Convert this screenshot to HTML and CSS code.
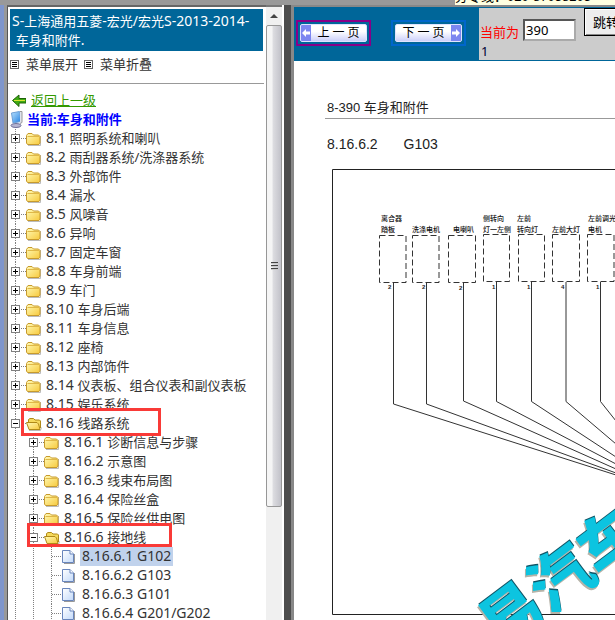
FILE: index.html
```html
<!DOCTYPE html>
<html lang="zh-CN">
<head>
<meta charset="utf-8">
<title>车身和附件</title>
<link rel="stylesheet" href="styles.css">
</head>
<body>
<svg class="defs" aria-hidden="true">
  <defs>
    <linearGradient id="gold" x1="0" y1="0" x2="1" y2="1"><stop offset="0" stop-color="#fffbb8"/><stop offset="1" stop-color="#f7c93c"/></linearGradient>
    <linearGradient id="paper" x1="0" y1="0" x2="1" y2="1"><stop offset="0" stop-color="#ffffff"/><stop offset="1" stop-color="#c3dafa"/></linearGradient>
    <linearGradient id="screen" x1="0" y1="0" x2="1" y2="1"><stop offset="0" stop-color="#b9e2ff"/><stop offset="1" stop-color="#1f7fe0"/></linearGradient>
  </defs>
  <symbol id="plus" viewBox="0 0 18 19">
    <path d="M13 9.500h5" stroke="#808080" stroke-dasharray="1 1"/>
    <rect x="3.500" y="5.500" width="8" height="8" fill="#fff" stroke="#808080"/>
    <path d="M5 9.500h5M7.500 7v5" stroke="#000"/>
  </symbol>
  <symbol id="minus" viewBox="0 0 18 19">
    <path d="M13 9.500h5" stroke="#808080" stroke-dasharray="1 1"/>
    <rect x="3.500" y="5.500" width="8" height="8" fill="#fff" stroke="#808080"/>
    <path d="M5 9.500h5" stroke="#000"/>
  </symbol>
  <symbol id="join" viewBox="0 0 18 19"><path d="M8 9.500h10" stroke="#808080" stroke-dasharray="1 1"/></symbol>
  <symbol id="folder" viewBox="0 0 18 19">
    <path d="M2 16.500h12.500V7" fill="none" stroke="#bbb" stroke-width="1"/>
    <path d="M.5 14V6.500L2 4.500h4l1.500 1.500h5l1.500 1.500V14l-1 1.500H1.500z" fill="url(#gold)" stroke="#c79a2c"/>
    <path d="M1.500 7.500h11.500" stroke="#e0b848"/>
  </symbol>
  <symbol id="open" viewBox="0 0 18 19">
    <path d="M3 16.500h11.500l1-3" fill="none" stroke="#bbb" stroke-width="1"/>
    <path d="M2.500 13V5.500L4 4.500h3.500L9 6h4.500l1 1V14" fill="#f5d95c" stroke="#b08a18"/>
    <path d="M.5 8.500H11l1.500 1.500 1.500 5.500H3z" fill="url(#gold)" stroke="#b08a18"/>
  </symbol>
  <symbol id="file" viewBox="0 0 18 19">
    <path d="M2 16.500h10.500V7" fill="none" stroke="#999" stroke-width="1"/>
    <path d="M.5 3.500H8l3.500 3.500v8.500H.5z" fill="url(#paper)" stroke="#6885bc"/>
    <path d="M8 3.500V7h3.500" fill="#fff" stroke="#6885bc"/>
  </symbol>
  <symbol id="list" viewBox="0 0 9 9"><rect x=".5" y=".5" width="8" height="8" fill="#fff" stroke="#666"/><path d="M2 2.500h5M2 4.500h5M2 6.500h5" stroke="#000"/></symbol>
  <symbol id="back" viewBox="0 0 18 19"><path d="M4.500 9.500L11 4v3.500h7v4.500h-7v3.500z" fill="#3faa12" stroke="#1d6208"/><path d="M6 9.500h11" stroke="#d7e632"/></symbol>
  <symbol id="computer" viewBox="0 0 18 19">
    <ellipse cx="8" cy="15.500" rx="5" ry="2" fill="#b6b6d2" stroke="#6f6f98"/>
    <path d="M3.500 3l8-1.500 1.500 10-8 1.500z" fill="url(#screen)" stroke="#6ea0d6"/>
    <path d="M12 1.500h2v11l-2 1" fill="#dfe3ee" stroke="#999"/>
  </symbol>
</svg>
<header class="strip"><span class="hotline">分专线：020-87058205</span></header>
<div class="frames">
  <nav class="sidebar">
    <div class="panel">
      <h1 class="book">S-<span class="han">上海通用五菱</span>-<span class="han">宏光</span>/<span class="han">宏光</span>S-2013-2014-<br>&nbsp;<span class="han">车身和附件</span>.</h1>
      <div class="actions">
        <a href="#"><svg class="list"><use href="#list"/></svg>菜单展开</a>
        <a href="#"><svg class="list"><use href="#list"/></svg>菜单折叠</a>
      </div>
      <hr class="rule">
      <div class="row"><svg class="icon lead"><use href="#back"/></svg><a class="return" href="#">返回上一级</a></div>
      <div class="row"><svg class="icon"><use href="#computer"/></svg><strong class="current">当前:车身和附件</strong></div>
      <ul class="tree">
        <li><div class="row"><button class="toggle" aria-label="8.1"><svg class="icon"><use href="#plus"/></svg></button><svg class="icon"><use href="#folder"/></svg><a href="#"><b>8.1 </b>照明系统和喇叭</a></div></li>
        <li><div class="row"><button class="toggle" aria-label="8.2"><svg class="icon"><use href="#plus"/></svg></button><svg class="icon"><use href="#folder"/></svg><a href="#"><b>8.2 </b>雨刮器系统/洗涤器系统</a></div></li>
        <li><div class="row"><button class="toggle" aria-label="8.3"><svg class="icon"><use href="#plus"/></svg></button><svg class="icon"><use href="#folder"/></svg><a href="#"><b>8.3 </b>外部饰件</a></div></li>
        <li><div class="row"><button class="toggle" aria-label="8.4"><svg class="icon"><use href="#plus"/></svg></button><svg class="icon"><use href="#folder"/></svg><a href="#"><b>8.4 </b>漏水</a></div></li>
        <li><div class="row"><button class="toggle" aria-label="8.5"><svg class="icon"><use href="#plus"/></svg></button><svg class="icon"><use href="#folder"/></svg><a href="#"><b>8.5 </b>风噪音</a></div></li>
        <li><div class="row"><button class="toggle" aria-label="8.6"><svg class="icon"><use href="#plus"/></svg></button><svg class="icon"><use href="#folder"/></svg><a href="#"><b>8.6 </b>异响</a></div></li>
        <li><div class="row"><button class="toggle" aria-label="8.7"><svg class="icon"><use href="#plus"/></svg></button><svg class="icon"><use href="#folder"/></svg><a href="#"><b>8.7 </b>固定车窗</a></div></li>
        <li><div class="row"><button class="toggle" aria-label="8.8"><svg class="icon"><use href="#plus"/></svg></button><svg class="icon"><use href="#folder"/></svg><a href="#"><b>8.8 </b>车身前端</a></div></li>
        <li><div class="row"><button class="toggle" aria-label="8.9"><svg class="icon"><use href="#plus"/></svg></button><svg class="icon"><use href="#folder"/></svg><a href="#"><b>8.9 </b>车门</a></div></li>
        <li><div class="row"><button class="toggle" aria-label="8.10"><svg class="icon"><use href="#plus"/></svg></button><svg class="icon"><use href="#folder"/></svg><a href="#"><b>8.10 </b>车身后端</a></div></li>
        <li><div class="row"><button class="toggle" aria-label="8.11"><svg class="icon"><use href="#plus"/></svg></button><svg class="icon"><use href="#folder"/></svg><a href="#"><b>8.11 </b>车身信息</a></div></li>
        <li><div class="row"><button class="toggle" aria-label="8.12"><svg class="icon"><use href="#plus"/></svg></button><svg class="icon"><use href="#folder"/></svg><a href="#"><b>8.12 </b>座椅</a></div></li>
        <li><div class="row"><button class="toggle" aria-label="8.13"><svg class="icon"><use href="#plus"/></svg></button><svg class="icon"><use href="#folder"/></svg><a href="#"><b>8.13 </b>内部饰件</a></div></li>
        <li><div class="row"><button class="toggle" aria-label="8.14"><svg class="icon"><use href="#plus"/></svg></button><svg class="icon"><use href="#folder"/></svg><a href="#"><b>8.14 </b>仪表板、组合仪表和副仪表板</a></div></li>
        <li><div class="row"><button class="toggle" aria-label="8.15"><svg class="icon"><use href="#plus"/></svg></button><svg class="icon"><use href="#folder"/></svg><a href="#"><b>8.15 </b>娱乐系统</a></div></li>
        <li>
          <div class="row"><button class="toggle" aria-label="8.16"><svg class="icon"><use href="#minus"/></svg></button><svg class="icon"><use href="#open"/></svg><a href="#"><b>8.16 </b>线路系统</a><span class="mark mark-outer"></span></div>
          <ul>
            <li><div class="row"><button class="toggle" aria-label="8.16.1"><svg class="icon"><use href="#plus"/></svg></button><svg class="icon"><use href="#folder"/></svg><a href="#"><b>8.16.1 </b>诊断信息与步骤</a></div></li>
            <li><div class="row"><button class="toggle" aria-label="8.16.2"><svg class="icon"><use href="#plus"/></svg></button><svg class="icon"><use href="#folder"/></svg><a href="#"><b>8.16.2 </b>示意图</a></div></li>
            <li><div class="row"><button class="toggle" aria-label="8.16.3"><svg class="icon"><use href="#plus"/></svg></button><svg class="icon"><use href="#folder"/></svg><a href="#"><b>8.16.3 </b>线束布局图</a></div></li>
            <li><div class="row"><button class="toggle" aria-label="8.16.4"><svg class="icon"><use href="#plus"/></svg></button><svg class="icon"><use href="#folder"/></svg><a href="#"><b>8.16.4 </b>保险丝盒</a></div></li>
            <li><div class="row"><button class="toggle" aria-label="8.16.5"><svg class="icon"><use href="#plus"/></svg></button><svg class="icon"><use href="#folder"/></svg><a href="#"><b>8.16.5 </b>保险丝供电图</a></div></li>
            <li>
              <div class="row"><button class="toggle" aria-label="8.16.6"><svg class="icon"><use href="#minus"/></svg></button><svg class="icon"><use href="#open"/></svg><a href="#"><b>8.16.6 </b>接地线</a><span class="mark mark-inner"></span></div>
              <ul>
                <li><div class="row"><svg class="icon"><use href="#join"/></svg><svg class="icon"><use href="#file"/></svg><a class="selected" href="#"><b>8.16.6.1 G102</b></a></div></li>
                <li><div class="row"><svg class="icon"><use href="#join"/></svg><svg class="icon"><use href="#file"/></svg><a href="#"><b>8.16.6.2 G103</b></a></div></li>
                <li><div class="row"><svg class="icon"><use href="#join"/></svg><svg class="icon"><use href="#file"/></svg><a href="#"><b>8.16.6.3 G101</b></a></div></li>
                <li><div class="row"><svg class="icon"><use href="#join"/></svg><svg class="icon"><use href="#file"/></svg><a href="#"><b>8.16.6.4 G201/G202</b></a></div></li>
              </ul>
            </li>
          </ul>
        </li>
      </ul>
    </div>
    <div class="scrollbar">
      <div class="scroll-up"></div>
      <div class="track"><div class="thumb"><i></i><i></i><i></i></div></div>
    </div>
  </nav>
  <div class="splitter"></div>
  <main class="viewer">
    <div class="toolbar">
      <div class="pager">
        <a class="page-link visited" href="#"><span class="page-button"><svg class="arrow" viewBox="0 0 10 18"><path d="M1 9l4-4v2.500h4v3H5V13z"/></svg><span class="page-text">上 一 页</span></span></a>
        <a class="page-link" href="#"><span class="page-button"><span class="page-text">下 一 页</span><svg class="arrow" viewBox="0 0 10 18"><path d="M9 9L5 5v2.500H1v3h4V13z"/></svg></span></a>
      </div>
      <form class="jump">
        <div class="jump-row">
          <label for="page">当前为</label>
          <input id="page" type="text" value="390">
          <button type="button">跳转</button>
        </div>
        <span class="first">1</span>
      </form>
    </div>
    <article class="sheet">
      <p class="running">8-390 车身和附件</p>
      <h2 class="section"><span>8.16.6.2</span><span>G103</span></h2>
      <svg class="diagram" width="480" height="451" viewBox="332 169 480 451">
        <path d="M812 169.500H332.500v445H812" fill="none" stroke="#222"/>
        <g class="boxes">
          <path d="M379.500 235.500h26.500v47h-26.500z"/><path d="M412.500 235.500h26.500v47h-26.500z"/><path d="M448.500 235.500h27v47h-27z"/><path d="M483.500 234.500h26v47h-26z"/><path d="M518.500 234.500h26v47h-26z"/><path d="M552.500 234.500h27v47h-27z"/><path d="M587.500 234.500h26.500v47h-26.500z"/>
        </g>
        <g class="wires">
          <path d="M393.500 282v122L616 475"/><path d="M426.500 282v122L616 473"/><path d="M463.500 282v119L616 469"/><path d="M496.500 282v119.500L616 464"/><path d="M531.500 282v119.500L616 457"/><path d="M566 282v119.500L616 444"/><path d="M600.500 282v119.500L616 421"/>
        </g>
        <g class="names">
          <text x="381" y="221">离合器</text><text x="381" y="232">踏板</text>
          <text x="412" y="232">洗涤电机</text><text x="453" y="232">电喇叭</text>
          <text x="483" y="221">侧转向</text><text x="483" y="232">灯一左侧</text>
          <text x="517" y="221">左前</text><text x="517" y="232">转向灯</text>
          <text x="552" y="232">左前大灯</text>
          <text x="588" y="221">左前调光</text><text x="588" y="232">电机</text>
        </g>
        <g class="pins">
          <text x="388" y="289">2</text><text x="422" y="289">2</text><text x="459" y="290">2</text><text x="492" y="289">1</text><text x="527" y="289">1</text><text x="561" y="289">4</text><text x="596" y="289">1</text>
        </g>
        <g class="watermark" transform="translate(500 652) rotate(-37)">
          <text class="edge" x="-2" y="1">易汽车</text>
          <text class="shade" x="1" y="-1">易汽车</text>
          <text class="face" x="0" y="0">易汽车</text>
        </g>
      </svg>
    </article>
  </main>
</div>
</body>
</html>
```
FILE: styles.css
```css
* { box-sizing: border-box; }

body {
  margin: 0;
  height: 100vh;
  overflow: hidden;
  display: flex;
  flex-direction: column;
  background: #999;
  color: #333;
  font: 13px/19px "Noto Sans", "Noto Sans CJK SC", sans-serif;
}

a { color: inherit; text-decoration: none; }
.defs { position: absolute; width: 0; height: 0; }

.strip {
  flex: none;
  height: 5px;
  display: flex;
  justify-content: flex-end;
  overflow: hidden;
}
.hotline {
  width: 160px;
  display: flex;
  align-items: flex-end;
  background: #ffffe1;
  color: #000;
  font: 13px/16px "Liberation Sans", "Noto Sans CJK SC", sans-serif;
  white-space: nowrap;
}

.frames {
  flex: 1;
  min-height: 0;
  display: grid;
  grid-template-columns: 284px 8px minmax(0, 1fr);
}

.sidebar {
  display: flex;
  min-height: 0;
  border-left: 4px solid #7f96cc;
  border-right: 2px solid #fff;
  background: #999;
  padding-left: 3px;
}
.panel {
  flex: 1;
  min-width: 0;
  overflow: hidden;
  background: #fff;
  border-top: 2px solid #666;
  border-left: 1px solid #555;
}
.book {
  margin: 2px 3px 0 2px;
  padding: 2px;
  background: #069;
  color: #fff;
  font-size: 14px;
  font-weight: 400;
  line-height: 19px;
  white-space: nowrap;
}
.han { font-size: 13px; line-height: 1; }
.actions {
  display: flex;
  gap: 6px;
  padding: 4px 2px 9px;
}
.actions a { display: flex; align-items: center; gap: 7px; }
.list { width: 9px; height: 9px; }
.rule { margin: 0 2px 7px 0; border: 0; border-top: 1px solid #999; }

.row {
  position: relative;
  display: flex;
  align-items: center;
  height: 19px;
  white-space: nowrap;
}
.icon { flex: none; display: block; width: 18px; height: 19px; }
.lead { margin-right: 5px; }
.return { color: #390; text-decoration: underline; }
.current { color: #00f; padding-left: 1px; }

.tree, .tree ul { margin: 0; padding: 0; list-style: none; }
.tree ul { padding-left: 18px; }
.tree li {
  background: repeating-linear-gradient(#808080 0 1px, transparent 1px 2px) 7px 0 / 1px 100% no-repeat;
}
.toggle { padding: 0; border: 0; background: none; }
.tree a { padding: 0 2px; line-height: 19px; }
.tree b { font-size: 14px; font-weight: 400; line-height: 1; white-space: pre; }
.tree .selected { background: #c0d2ec; }
.mark { position: absolute; border: 3px solid #f93a37; }
.mark-outer { left: 13px; top: -6px; width: 140px; height: 28px; }
.mark-inner { left: 1px; top: -5px; width: 145px; height: 24px; }

.scrollbar {
  flex: none;
  width: 16px;
  display: flex;
  flex-direction: column;
  background: #f0f0f0;
  border-top: 2px solid #777;
}
.scroll-up { flex: none; display: grid; place-items: center; height: 18px; }
.scroll-up::before { content: ""; border: 4px solid transparent; border-top: 0; border-bottom-color: #444; }
.track { flex: 1; min-height: 0; }
.thumb {
  height: 81%;
  display: flex;
  flex-direction: column;
  align-items: center;
  justify-content: center;
  gap: 1px;
  border: 1px solid #979797;
  border-radius: 2px;
  background: linear-gradient(90deg, #f5f5f5 0 35%, #dcdce0 45%, #c2c2c9);
}
.thumb i { width: 7px; height: 2px; background: #444; border-bottom: 1px solid #ccc; }
.splitter { background: #4d4d4d; border-right: 1px solid #888; }

.viewer {
  min-width: 0;
  display: flex;
  flex-direction: column;
  overflow: hidden;
  background: #fff;
  border-top: 2px solid #888;
  border-left: 2px solid #888;
}
.toolbar { flex: none; display: flex; height: 54px; background: #069; padding: 1px 0; }
.pager {
  flex: none;
  width: 185px;
  display: flex;
  align-items: flex-start;
  gap: 20px;
  padding: 12px 2px;
}
.page-link { display: block; padding: 2px; border: 2px solid #06c; }
.visited { border-color: #808; }
.page-button {
  display: flex;
  align-items: center;
  width: 67px;
  height: 18px;
  overflow: hidden;
  border: 1px solid #dfe3ff;
  border-radius: 2px;
  background: linear-gradient(#fff 40%, #ccd0fa);
}
.arrow { flex: none; width: 10px; height: 18px; background: #7c86f0; fill: #fff; }
.page-text { flex: 1; text-align: center; color: #000; font-size: 12px; line-height: 16px; }

.jump { flex: 1; min-width: 0; background: #ccc; padding-left: 1px; overflow: hidden; }
.jump-row { display: flex; align-items: center; height: 34px; }
.jump label { flex: none; padding-top: 14px; margin-right: 4px; color: #f00; }
.jump input {
  flex: none;
  width: 53px;
  height: 22px;
  margin: 12px 8px 2px 0;
  padding: 1px;
  border: 2px inset #aaa;
  background: #fff;
  color: #000;
  font: inherit;
}
.jump button {
  flex: none;
  align-self: flex-start;
  width: 44px;
  height: 28px;
  padding: 0;
  border: 1px solid #000;
  box-shadow: inset 1px 1px #fff, inset -1px -1px #888;
  background: #eee;
  color: #000;
  font: inherit;
}
.first { display: block; padding-left: 1px; color: #003; }

.sheet { flex: 1; min-height: 0; padding: 37px 0 0 31px; color: #222; font-family: "Liberation Sans", "Noto Sans CJK SC", sans-serif; }
.running { margin: 0; padding: 0 2px; height: 21px; border-bottom: 1px solid #999; }
.section { display: flex; gap: 26px; margin: 16px 0 15px; padding-left: 2px; font-size: 14px; font-weight: 400; }
.diagram { display: block; margin-left: 7px; }
.boxes { fill: none; stroke: #333; stroke-dasharray: 6 3; }
.wires { fill: none; stroke: #333; }
.names { fill: #111; font-size: 7px; font-weight: 500; }
.pins { fill: #222; font-size: 6px; font-weight: 700; }
.watermark { font-family: "Noto Sans CJK SC", sans-serif; font-size: 62px; font-weight: 900; }
.edge { fill: #b5b3a8; }
.shade { fill: #156; }
.face { fill: #0cc4e0; }
```
